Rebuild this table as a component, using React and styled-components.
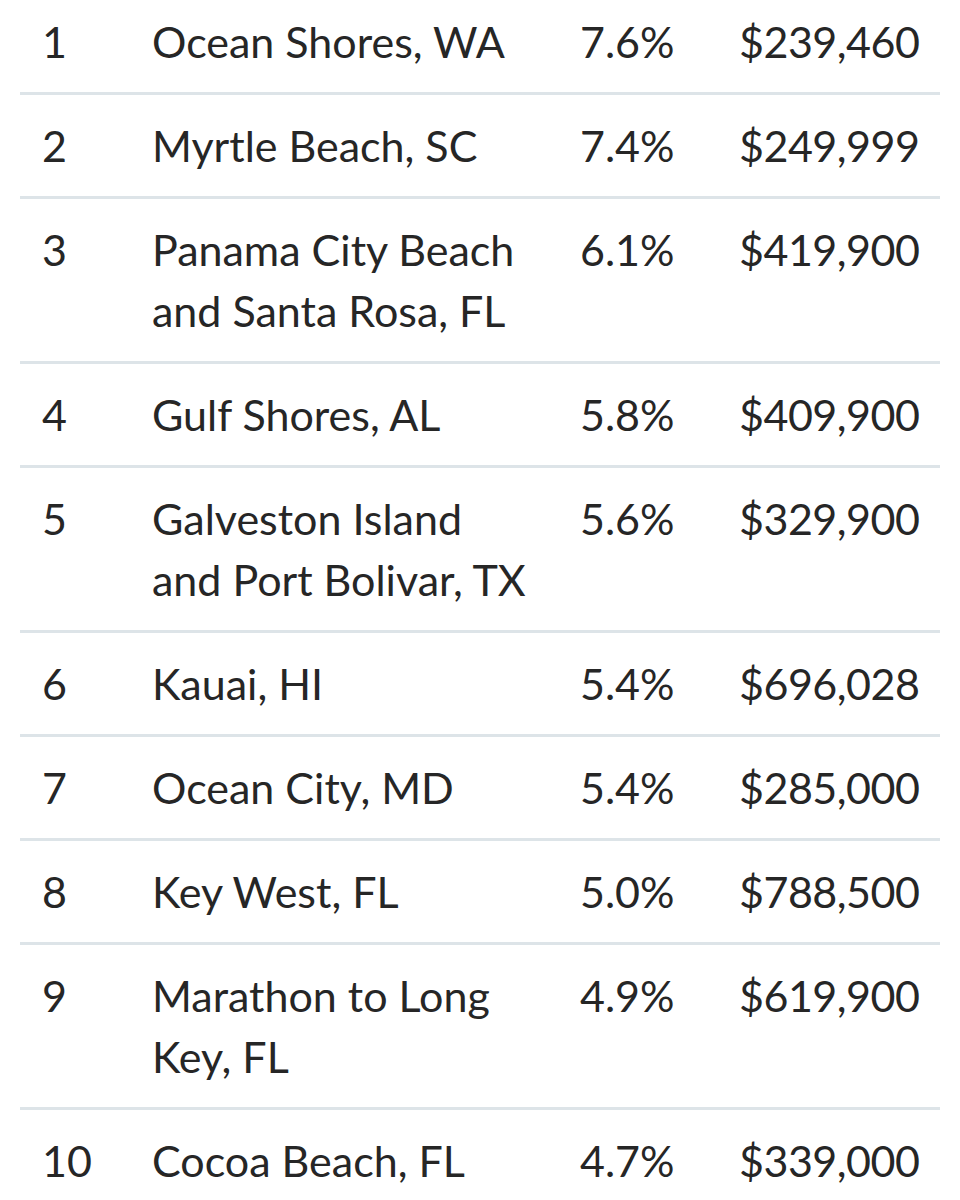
import React from "react"
import styled, { createGlobalStyle } from "styled-components"

const rows = [
  { rank: 1, place: "Ocean Shores, WA", rate: "7.6%", price: "$239,460" },
  { rank: 2, place: "Myrtle Beach, SC", rate: "7.4%", price: "$249,999" },
  { rank: 3, place: "Panama City Beach and Santa Rosa, FL", rate: "6.1%", price: "$419,900" },
  { rank: 4, place: "Gulf Shores, AL", rate: "5.8%", price: "$409,900" },
  { rank: 5, place: "Galveston Island and Port Bolivar, TX", rate: "5.6%", price: "$329,900" },
  { rank: 6, place: "Kauai, HI", rate: "5.4%", price: "$696,028" },
  { rank: 7, place: "Ocean City, MD", rate: "5.4%", price: "$285,000" },
  { rank: 8, place: "Key West, FL", rate: "5.0%", price: "$788,500" },
  { rank: 9, place: "Marathon to Long Key, FL", rate: "4.9%", price: "$619,900" },
  { rank: 10, place: "Cocoa Beach, FL", rate: "4.7%", price: "$339,000" },
]

const App = () => {
  return (
    <>
      <GlobalStyle />
      <Page>
        <Table>
          <tbody>
            {rows.map((row) => (
              <Row key={row.rank}>
                <RankCell>{row.rank}</RankCell>
                <PlaceCell>{row.place}</PlaceCell>
                <RateCell>{row.rate}</RateCell>
                <PriceCell>{row.price}</PriceCell>
              </Row>
            ))}
          </tbody>
        </Table>
      </Page>
    </>
  )
}

export default App

const GlobalStyle = createGlobalStyle`
  html, body {
    margin: 0;
    padding: 0;
    background: #fff;
  }
  body {
    font-family: "Lato", "Noto Sans", sans-serif;
    color: #262626;
  }
`

const Page = styled.div`
  width: 960px;
  height: 1200px;
  overflow: hidden;
  padding: 0 20px;
  box-sizing: border-box;
`

const Table = styled.table`
  width: 920px;
  margin-top: -9px;
  border-collapse: collapse;
  table-layout: fixed;
`

const Row = styled.tr`
  border-bottom: 3px solid #dde4e8;
`

const Cell = styled.td`
  padding: 20px 0;
  font-size: 43px;
  line-height: 61px;
  vertical-align: top;
  color: #262626;
`

const RankCell = styled(Cell)`
  width: 110px;
  padding-left: 22px;
`

const PlaceCell = styled(Cell)`
  width: 375px;
  padding-right: 53px;
`

const RateCell = styled(Cell)`
  width: 159px;
`

const PriceCell = styled(Cell)`
  letter-spacing: -0.5px;
`
